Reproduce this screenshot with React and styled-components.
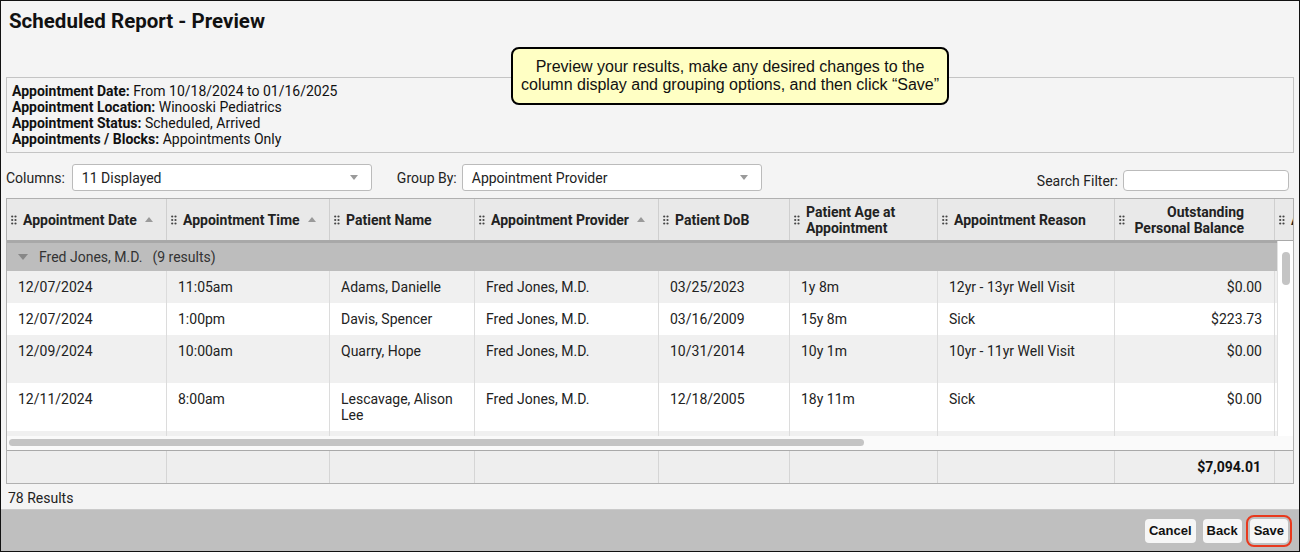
import React from 'react';
import styled, { createGlobalStyle } from 'styled-components';

const GlobalStyle = createGlobalStyle`
  html, body { margin: 0; padding: 0; background: #fff; }
  body { font-family: Roboto, "Liberation Sans", Arial, sans-serif; font-size: 14px; color: #222; }
  * { box-sizing: border-box; }
`;

const COLS = [160, 163, 145, 184, 131, 148, 177, 160, 140];
const GRID = COLS.map((w) => `${w}px`).join(' ');

const Frame = styled.div`
  position: relative;
  width: 1300px;
  height: 552px;
  border: 1px solid #111;
  background: #f4f4f4;
  display: flex;
  flex-direction: column;
  overflow: hidden;
`;

const Title = styled.h1`
  margin: 0;
  height: 40px;
  line-height: 40px;
  padding: 0 8px;
  font-size: 20.5px;
  font-weight: 700;
  color: #111;
`;

const Callout = styled.div`
  position: absolute;
  left: 510px;
  top: 46px;
  width: 438px;
  height: 58px;
  background: #ffffc4;
  border: 2px solid #000;
  border-radius: 8px;
  font-family: "Liberation Sans", Arial, sans-serif;
  font-size: 16px;
  line-height: 18px;
  color: #111;
  text-align: center;
  display: flex;
  align-items: center;
  justify-content: center;
  z-index: 2;
`;

const Criteria = styled.div`
  margin: 36px 5px 0;
  height: 76px;
  border: 1px solid #c4c4c4;
  padding: 5px 5px;
  line-height: 16px;
  color: #111;
`;

const CritLabel = styled.b`
  font-weight: 700;
`;

const Controls = styled.div`
  display: flex;
  align-items: flex-end;
  padding: 11px 10px 0 5px;
`;

const Field = styled.div`
  display: flex;
  align-items: center;
  gap: ${(p) => p.$gap || 5}px;
  margin-left: ${(p) => p.$ml || '0'};
  color: #222;
`;

const Select = styled.div`
  width: 300px;
  height: 27px;
  background: #fff;
  border: 1px solid #bbb;
  border-radius: 3px;
  display: flex;
  align-items: center;
  justify-content: space-between;
  padding: 0 13px 0 9px;
  color: #222;
`;

const SearchInput = styled.div`
  width: 166px;
  height: 21px;
  background: #fff;
  border: 1px solid #bbb;
  border-radius: 4px;
`;

const Table = styled.div`
  margin: 7px 5px 0;
  border: 1px solid #b0b0b0;
  background: #fff;
  display: flex;
  flex-direction: column;
  overflow: hidden;
`;

const HeaderRow = styled.div`
  display: grid;
  grid-template-columns: ${GRID};
  height: 42px;
  background: #e9e9e9;
  border-bottom: 1px solid #a9a9a9;
`;

const HeaderCell = styled.div`
  display: flex;
  align-items: center;
  gap: 6px;
  padding: 0 ${(p) => (p.$right ? 30 : 6)}px 0 4px;
  border-right: 1px solid #cfcfcf;
  font-weight: 700;
  color: #222;
  line-height: 16px;
  white-space: nowrap;
  overflow: hidden;
`;

const HeaderText = styled.span`
  flex: ${(p) => (p.$right ? 1 : '0 0 auto')};
  text-align: ${(p) => (p.$right ? 'right' : 'left')};
`;

const Body = styled.div`
  display: flex;
  height: 195px;
`;

const Viewport = styled.div`
  flex: 1;
  overflow: hidden;
`;

const VScroll = styled.div`
  width: 16px;
  border-left: 1px solid #e2e2e2;
  background: #fff;
  padding: 11px 0 0 4px;
`;

const VThumb = styled.div`
  width: 8px;
  height: 33px;
  border-radius: 4px;
  background: #c4c4c4;
`;

const GroupRow = styled.div`
  height: 30px;
  border-top: 2px solid #a8a8a8;
  background: #bdbdbd;
  display: flex;
  align-items: center;
  padding-left: 11px;
  gap: 11px;
  color: #333;
`;

const GroupCount = styled.span`
  padding-left: 10px;
`;

const Row = styled.div`
  display: grid;
  grid-template-columns: ${GRID};
  background: ${(p) => (p.$alt ? '#f0f0f0' : '#fff')};
  min-height: ${(p) => (p.$tall ? 48 : 32)}px;
`;

const Cell = styled.div`
  padding: 8px 12px 8px 11px;
  border-right: 1px solid #dcdcdc;
  line-height: 16px;
  color: #222;
  text-align: ${(p) => (p.$right ? 'right' : 'left')};
`;

const HScroll = styled.div`
  height: 14px;
  background: #fafafa;
  padding: 3px 0 0 2px;
`;

const HThumb = styled.div`
  width: 855px;
  height: 7px;
  border-radius: 4px;
  background: #c4c4c4;
`;

const FooterRow = styled.div`
  display: grid;
  grid-template-columns: ${GRID};
  height: 33px;
  border-top: 1px solid #a9a9a9;
  background: #eeeeee;
`;

const FooterCell = styled.div`
  border-right: 1px solid #d5d5d5;
  display: flex;
  align-items: center;
  justify-content: flex-end;
  padding-right: 13px;
  font-weight: 700;
  color: #111;
`;

const Results = styled.div`
  padding: 6px 7px 3px;
  line-height: 16px;
  color: #222;
`;

const ButtonBar = styled.div`
  flex: 1;
  background: #bfbfbf;
  border-top: 1px solid #cacaca;
  display: flex;
  justify-content: flex-end;
  align-items: center;
  gap: 7px;
  padding-right: 11px;
`;

const Button = styled.button`
  height: 24px;
  padding: 0 4px;
  margin-left: ${(p) => (p.$highlight ? 1 : 0)}px;
  background: #f6f6f6;
  border: none;
  border-radius: 4px;
  font-family: "Liberation Sans", Arial, sans-serif;
  font-size: 13px;
  font-weight: 700;
  color: #111;
  outline: ${(p) => (p.$highlight ? '2px solid #e8391d' : 'none')};
  outline-offset: 2px;
`;

const Handle = () => (
  <svg width="6" height="10" viewBox="0 0 6 10" style={{ flex: '0 0 auto' }}>
    {[1.5, 5, 8.5].map((y) =>
      [1.2, 4.5].map((x) => <circle key={`${x}-${y}`} cx={x} cy={y} r="1.1" fill="#444" />)
    )}
  </svg>
);

const SortUp = () => (
  <svg width="8" height="5" viewBox="0 0 8 5" style={{ marginLeft: 2, flex: '0 0 auto' }}>
    <polygon points="0,5 4,0 8,5" fill="#9a9a9a" />
  </svg>
);

const Caret = ({ w = 8, h = 5, color = '#9a9a9a' }) => (
  <svg width={w} height={h} viewBox={`0 0 ${w} ${h}`} style={{ flex: '0 0 auto' }}>
    <polygon points={`0,0 ${w},0 ${w / 2},${h}`} fill={color} />
  </svg>
);

const headers = [
  { t: 'Appointment Date', sort: true },
  { t: 'Appointment Time', sort: true },
  { t: 'Patient Name' },
  { t: 'Appointment Provider', sort: true },
  { t: 'Patient DoB' },
  { t: ['Patient Age at', 'Appointment'] },
  { t: 'Appointment Reason' },
  { t: ['Outstanding', 'Personal Balance'], right: true },
  { t: 'Appointment Status' },
];

const rows = [
  ['12/07/2024', '11:05am', 'Adams, Danielle', 'Fred Jones, M.D.', '03/25/2023', '1y 8m', '12yr - 13yr Well Visit', '$0.00', ''],
  ['12/07/2024', '1:00pm', 'Davis, Spencer', 'Fred Jones, M.D.', '03/16/2009', '15y 8m', 'Sick', '$223.73', ''],
  ['12/09/2024', '10:00am', 'Quarry, Hope', 'Fred Jones, M.D.', '10/31/2014', '10y 1m', '10yr - 11yr Well Visit', '$0.00', '', true],
  ['12/11/2024', '8:00am', 'Lescavage, Alison Lee', 'Fred Jones, M.D.', '12/18/2005', '18y 11m', 'Sick', '$0.00', ''],
  ['', '', '', '', '', '', '', '', ''],
];

export default function App() {
  return (
    <>
      <GlobalStyle />
      <Frame>
        <Title>Scheduled Report - Preview</Title>
        <Callout>
          <div>
            Preview your results, make any desired changes to the
            <br />
            column display and grouping options, and then click “Save”
          </div>
        </Callout>
        <Criteria>
          <div><CritLabel>Appointment Date:</CritLabel> From 10/18/2024 to 01/16/2025</div>
          <div><CritLabel>Appointment Location:</CritLabel> Winooski Pediatrics</div>
          <div><CritLabel>Appointment Status:</CritLabel> Scheduled, Arrived</div>
          <div><CritLabel>Appointments / Blocks:</CritLabel> Appointments Only</div>
        </Criteria>
        <Controls>
          <Field $gap={7}>
            <span>Columns:</span>
            <Select>
              <span>11 Displayed</span>
              <Caret />
            </Select>
          </Field>
          <Field $ml="25px" $gap={5}>
            <span>Group By:</span>
            <Select>
              <span>Appointment Provider</span>
              <Caret />
            </Select>
          </Field>
          <Field $ml="auto" $gap={5}>
            <span>Search Filter:</span>
            <SearchInput />
          </Field>
        </Controls>
        <Table>
          <HeaderRow>
            {headers.map((h, i) => (
              <HeaderCell key={i} $right={h.right}>
                <Handle />
                <HeaderText $right={h.right}>
                  {Array.isArray(h.t) ? (
                    <>
                      {h.t[0]}
                      <br />
                      {h.t[1]}
                    </>
                  ) : (
                    h.t
                  )}
                </HeaderText>
                {h.sort && <SortUp />}
              </HeaderCell>
            ))}
          </HeaderRow>
          <Body>
            <Viewport>
              <GroupRow>
                <Caret w={10} h={6} color="#878787" />
                <span>
                  Fred Jones, M.D.<GroupCount>(9 results)</GroupCount>
                </span>
              </GroupRow>
              {rows.map((r, i) => (
                <Row key={i} $alt={i % 2 === 0} $tall={r[9]}>
                  {r.slice(0, 9).map((c, j) => (
                    <Cell key={j} $right={j === 7}>
                      {c}
                    </Cell>
                  ))}
                </Row>
              ))}
            </Viewport>
            <VScroll>
              <VThumb />
            </VScroll>
          </Body>
          <HScroll>
            <HThumb />
          </HScroll>
          <FooterRow>
            {COLS.map((_, i) => (
              <FooterCell key={i}>{i === 7 ? '$7,094.01' : ''}</FooterCell>
            ))}
          </FooterRow>
        </Table>
        <Results>78 Results</Results>
        <ButtonBar>
          <Button>Cancel</Button>
          <Button>Back</Button>
          <Button $highlight>Save</Button>
        </ButtonBar>
      </Frame>
    </>
  );
}
